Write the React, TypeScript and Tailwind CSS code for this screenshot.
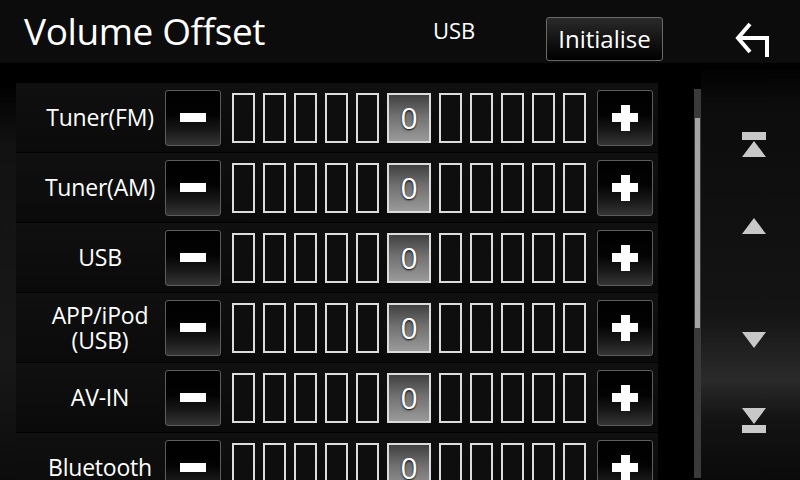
import React from "react";

const rows: { label: string[] }[] = [
  { label: ["Tuner(FM)"] },
  { label: ["Tuner(AM)"] },
  { label: ["USB"] },
  { label: ["APP/iPod", "(USB)"] },
  { label: ["AV-IN"] },
  { label: ["Bluetooth"] },
];

const btn =
  "w-[56px] h-[56px] shrink-0 rounded-[3px] border border-[#5c5c5c] bg-[linear-gradient(to_bottom,#000_0%,#030303_45%,#1a1a1a_75%,#353535_100%)] flex items-center justify-center";

function Cell() {
  return <div className="w-[23px] h-[50px] border-2 border-[#dcdcdc] bg-[#0e0e0e] shrink-0" />;
}

function Row({ label }: { label: string[] }) {
  return (
    <div className="h-[70px] flex items-center border-t border-[#000] bg-[linear-gradient(to_bottom,#101010,#0a0a0a)]">
      <div className="w-[149px] pl-[19px] shrink-0 text-center text-white text-[23px] leading-[25px] tracking-[-0.2px]">
        {label.map((l) => (
          <div key={l}>{l}</div>
        ))}
      </div>
      <div className={btn}>
        <div className="w-[26px] h-[9px] bg-white" />
      </div>
      <div className="flex items-center gap-[8px] ml-[11px]">
        <Cell />
        <Cell />
        <Cell />
        <Cell />
        <Cell />
        <div className="w-[44px] h-[50px] border-2 border-[#dcdcdc] bg-[linear-gradient(to_bottom,#404040_0%,#707070_45%,#9a9a9a_100%)] flex items-center justify-center text-white text-[30px] leading-none [text-shadow:0_1px_2px_#000]">
          0
        </div>
        <Cell />
        <Cell />
        <Cell />
        <Cell />
        <Cell />
      </div>
      <div className={btn + " ml-[11px]"}>
        <div className="relative w-[26px] h-[26px]">
          <div className="absolute left-0 top-[8.5px] w-[26px] h-[9px] bg-white" />
          <div className="absolute top-0 left-[8.5px] w-[9px] h-[26px] bg-white" />
        </div>
      </div>
    </div>
  );
}

export default function App() {
  return (
    <div
      className="relative w-[800px] h-[480px] overflow-hidden bg-black text-white"
      style={{ fontFamily: '"Open Sans", "Noto Sans", sans-serif' }}
    >
      {/* header */}
      <div className="h-[63px] bg-[#0c0c0c] flex items-center relative">
        <div className="pl-[24px] text-[37px] leading-none tracking-[-0.4px] pb-[3px]">Volume Offset</div>
        <div className="absolute left-[433px] top-[15px] text-[22px] leading-[30px]">USB</div>
        <div className="absolute left-[546px] top-[17px] w-[117px] h-[44px] rounded-[3px] border border-[#6a6a6a] bg-[linear-gradient(to_bottom,#2a2a2a_0%,#141414_50%,#000_100%)] flex items-center justify-center text-[24px] leading-none">
          Initialise
        </div>
        <svg className="absolute left-[733px] top-[20px]" width="40" height="40" viewBox="0 0 40 40">
          <path
            d="M17 4 L5 18 L17 32 M5 18 L34 18 L34 37"
            fill="none"
            stroke="white"
            strokeWidth="4"
            strokeLinejoin="miter"
          />
        </svg>
      </div>

      {/* body */}
      <div className="flex h-[417px] bg-black">
        <div className="w-[16px] shrink-0 bg-[linear-gradient(to_bottom,#000_0%,#000_5%,#121212_20%,#181818_70%,#0c0c0c)]" />
        <div className="w-[642px] shrink-0 pt-[19px]">
          {rows.map((r) => (
            <Row key={r.label.join()} label={r.label} />
          ))}
        </div>
        <div className="w-[36px] shrink-0" />
        {/* scrollbar */}
        <div className="w-[7px] shrink-0 mt-[26px] mb-[2px] bg-[#3a3a3a] relative">
          <div className="absolute left-[1px] top-[29px] w-[5px] h-[210px] bg-[#a4a4a4]" />
        </div>
        {/* nav */}
        <div className="flex-1 relative bg-[linear-gradient(to_bottom,#000_0%,#0c0c0c_10%,#141414_60%,#2a2a2a_76%,#141414_85%,#0a0a0a_100%)]">
          <div className="absolute left-[41px] top-[69px] flex flex-col items-center">
            <div className="w-[24px] h-[8px] bg-[#c8c8c8]" />
            <svg width="24" height="16" viewBox="0 0 24 16" className="mt-[1px]">
              <polygon points="12,0 24,16 0,16" fill="#c8c8c8" />
            </svg>
          </div>
          <svg className="absolute left-[41px] top-[155px]" width="24" height="16" viewBox="0 0 24 16">
            <polygon points="12,0 24,16 0,16" fill="#c8c8c8" />
          </svg>
          <svg className="absolute left-[41px] top-[269px]" width="24" height="16" viewBox="0 0 24 16">
            <polygon points="0,0 24,0 12,16" fill="#c8c8c8" />
          </svg>
          <div className="absolute left-[41px] top-[345px] flex flex-col items-center">
            <svg width="24" height="16" viewBox="0 0 24 16">
              <polygon points="0,0 24,0 12,16" fill="#c8c8c8" />
            </svg>
            <div className="w-[24px] h-[8px] bg-[#c8c8c8] mt-[1px]" />
          </div>
        </div>
      </div>
    </div>
  );
}
